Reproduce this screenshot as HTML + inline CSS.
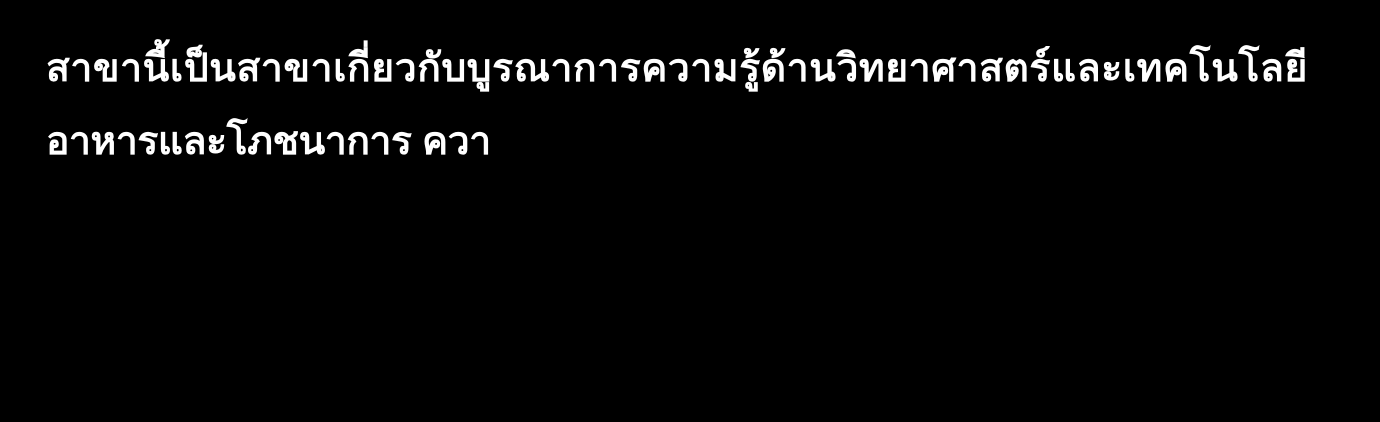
<!DOCTYPE html>
<html>
<head>
<meta charset="utf-8">
<style>
html,body{margin:0;padding:0;background:#000;}
body{width:1380px;height:422px;overflow:hidden;}
.t{position:absolute;left:46px;top:32px;width:1330px;color:#fff;
font-family:"Liberation Sans","Noto Sans CJK SC",sans-serif;font-size:39px;line-height:73px;font-weight:600;letter-spacing:0.6px;white-space:nowrap;}
.t span{letter-spacing:-0.4px;}
</style>
</head>
<body>
<div class="t">สาขานี้เป็นสาขาเกี่ยวกับบูรณาการความรู้ด้านวิทยาศาสตร์และเทคโนโลยี<br><span>อาหารและโภชนาการ ควา</span></div>
</body>
</html>
